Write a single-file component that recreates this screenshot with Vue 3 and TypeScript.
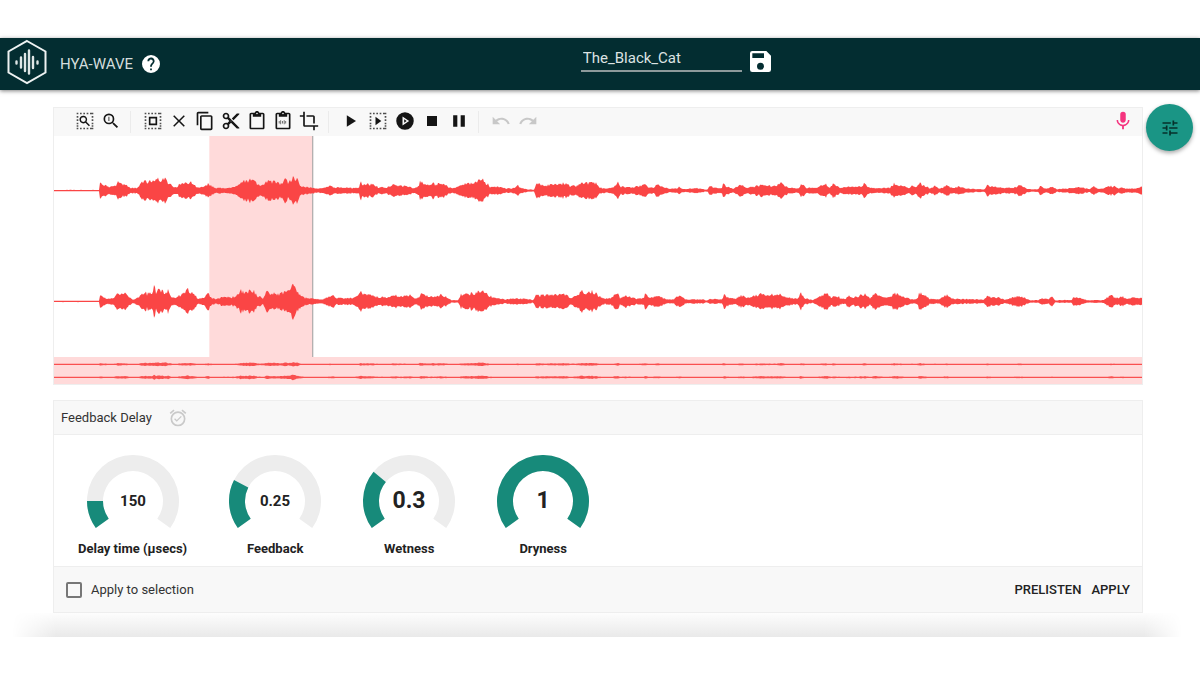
<script setup lang="ts">
import { ref } from 'vue'

interface Icon { name: string; d: string; dashed?: boolean; evenodd?: boolean }
interface Knob { label: string; value: number; ratio: number; font: number }

const trackName = ref('The_Black_Cat')
const applyToSelection = ref(false)

const dots =
  'M2 2h2v2H2zM6 2h2v2H6zM10 2h2v2h-2zM14 2h2v2h-2zM18 2h2v2h-2zM20 2h2v2h-2z' +
  'M2 20h2v2H2zM6 20h2v2H6zM10 20h2v2h-2zM14 20h2v2h-2zM18 20h2v2h-2zM20 20h2v2h-2z' +
  'M2 6h2v2H2zM2 10h2v2H2zM2 14h2v2H2zM2 17h2v2H2zM20 6h2v2h-2zM20 10h2v2h-2zM20 14h2v2h-2zM20 17h2v2h-2z'

const magnifier =
  'M15.500 14h-.79l-.28-.27A6.470 6.470 0 0 0 16 9.500 6.500 6.500 0 1 0 9.500 16c1.610 0 3.090-.59 4.230-1.570l.27.28v.79l5 4.990L20.490 19l-4.990-5zm-6 0a4.500 4.500 0 1 1 0-9 4.500 4.500 0 0 1 0 9z'

const groups: Icon[][] = [
  [
    { name: 'Zoom to selection', dashed: true, d: 'M13.800 12.800l4.200 4.200-1.300 1.300-4.200-4.200a4.600 4.600 0 1 1 1.300-1.300zM10 13.200a2.900 2.900 0 1 0 0-5.800 2.900 2.900 0 0 0 0 5.800z' },
    { name: 'Reset zoom', d: magnifier + 'M9 7h1v5H9z' },
  ],
  [
    { name: 'Select all', dashed: true, evenodd: true, d: 'M7 7h10v10H7zM9 9v6h6V9z' },
    { name: 'Deselect', d: 'M19 6.300L17.700 5 12 10.700 6.300 5 5 6.300 10.700 12 5 17.700 6.300 19 12 13.300 17.700 19 19 17.700 13.300 12z' },
    { name: 'Copy', d: 'M16 1H4c-1.100 0-2 .9-2 2v14h2V3h12V1zm3 4H8c-1.100 0-2 .9-2 2v14c0 1.100.9 2 2 2h11c1.100 0 2-.9 2-2V7c0-1.100-.9-2-2-2zm0 16H8V7h11v14z' },
    { name: 'Cut', d: 'M9.640 7.640c.23-.5.36-1.050.36-1.640 0-2.210-1.790-4-4-4S2 3.790 2 6s1.790 4 4 4c.59 0 1.140-.13 1.640-.36L10 12l-2.360 2.360C7.140 14.130 6.590 14 6 14c-2.210 0-4 1.790-4 4s1.790 4 4 4 4-1.790 4-4c0-.59-.13-1.140-.36-1.640L12 14l7 7h3v-1L9.640 7.640zM6 8a2 2 0 1 1 0-4 2 2 0 0 1 0 4zm0 12a2 2 0 1 1 0-4 2 2 0 0 1 0 4zm6-7.500a.5.5 0 1 1 0-1 .5.5 0 0 1 0 1zM19 3l-6 6 2 2 7-7V3z' },
    { name: 'Paste', d: 'M19 2h-4.180C14.400.84 13.300 0 12 0c-1.300 0-2.400.84-2.820 2H5c-1.100 0-2 .9-2 2v16c0 1.100.9 2 2 2h14c1.100 0 2-.9 2-2V4c0-1.100-.9-2-2-2zm-7 0a1 1 0 1 1 0 2 1 1 0 0 1 0-2zm7 18H5V4h2v3h10V4h2v16z' },
    { name: 'Mix paste', d: 'M19 2h-4.180C14.400.84 13.300 0 12 0c-1.300 0-2.400.84-2.820 2H5c-1.100 0-2 .9-2 2v16c0 1.100.9 2 2 2h14c1.100 0 2-.9 2-2V4c0-1.100-.9-2-2-2zm-7 0a1 1 0 1 1 0 2 1 1 0 0 1 0-2zm7 18H5V4h2v3h10V4h2v16zM7 12h.7v3H7zM9 11h.7v5H9zM11 12h.7v3H11zM13 11h.7v5h-.7zM15 12h.7v3h-.7z' },
    { name: 'Crop', d: 'M17 15h2V7c0-1.100-.9-2-2-2H9v2h8v8zM7 17V1H5v4H1v2h4v10c0 1.100.9 2 2 2h10v4h2v-4h4v-2H7z' },
  ],
  [
    { name: 'Play', d: 'M7 5v14l11-7z' },
    { name: 'Play selection', dashed: true, d: 'M9 7v10l7-5z' },
    { name: 'Play loop', evenodd: true, d: 'M12 1.500a10.500 10.500 0 1 0 0 21 10.500 10.500 0 0 0 0-21zM9 17.500v-11l8 5.500zM11 10v4l3-2z' },
    { name: 'Stop', d: 'M6 6h12v12H6z' },
    { name: 'Pause', d: 'M5 5h5v14H5zM14 5h5v14h-5z' },
  ],
]

const history: Icon[] = [
  { name: 'Undo', d: 'M12.500 8c-2.650 0-5.050.99-6.900 2.600L2 7v9h9l-3.620-3.620c1.390-1.160 3.160-1.880 5.120-1.880 3.540 0 6.550 2.310 7.600 5.500l2.370-.78C21.080 11.030 17.150 8 12.500 8z' },
  { name: 'Redo', d: 'M18.400 10.600C16.550 8.990 14.150 8 11.500 8c-4.650 0-8.580 3.030-9.960 7.220L3.900 16c1.050-3.190 4.050-5.500 7.600-5.500 1.950 0 3.730.72 5.120 1.880L13 16h9V7l-3.600 3.600z' },
]

const knobs: Knob[] = [
  { label: 'Delay time (µsecs)', value: 150, ratio: 0.143, font: 15 },
  { label: 'Feedback', value: 0.25, ratio: 0.25, font: 15 },
  { label: 'Wetness', value: 0.3, ratio: 0.3, font: 23 },
  { label: 'Dryness', value: 1, ratio: 1, font: 23 },
]

/** Ring segment of the dial, opening towards the bottom. */
function arc(ratio: number): string {
  const start = 144
  const end = start + 252 * ratio
  const point = (r: number, deg: number) => {
    const a = (deg * Math.PI) / 180
    return `${(46 + r * Math.cos(a)).toFixed(2)} ${(46 + r * Math.sin(a)).toFixed(2)}`
  }
  const large = end - start > 180 ? 1 : 0
  return `M${point(46, start)}A46 46 0 ${large} 1 ${point(46, end)}L${point(30, end)}A30 30 0 ${large} 0 ${point(30, start)}Z`
}

/* Peak envelopes as "position:amplitude"; every section starts 1110 samples after the last. */
const left = [
  '12:2 148:2 150:25 158:22 165:18 178:10 190:14 198:16 203:30 208:22 230:18 240:9 262:8 270:18 285:33 295:28 320:33 326:36 332:26 338:30 344:43 350:28 365:15 380:10 392:24 405:22 425:26 440:10 455:12 470:18 475:24 482:16 495:8 530:8 552:10 570:26 585:30 595:28 600:40 606:30 615:26 630:14 650:26 670:28 690:24 700:28 705:40 712:26 720:34 730:43 740:38 750:14 780:10 800:6 820:8 840:16 850:10 880:10 910:7 928:10 932:37 938:20 972:20 985:10 1010:10 1030:20 1050:14 1070:15 1090:8 1105:12',
  '0:26 20:18 34:18 38:29 43:18 70:24 85:10 100:7 118:14 140:22 165:24 182:33 195:28 210:12 235:12 260:6 280:8 288:10 292:20 297:10 320:4 342:3 348:22 370:18 395:18 435:24 450:14 470:14 485:27 500:24 520:30 540:10 560:6 580:10 593:26 602:12 640:10 650:14 672:19 690:10 704:8 710:22 722:12 750:6 770:6 776:12 790:4 830:8 850:6 853:3 862:3 868:14 890:8 906:8 910:34 914:16 940:6 962:20 980:8 1010:14 1025:18 1050:14 1065:14 1082:23 1100:12 1130:6',
  '0:8 25:8 35:20 50:8 75:8 108:20 118:10 132:23 150:8 170:12 205:12 215:10 220:23 240:8 290:8 300:8 312:22 345:12 358:8 361:14 382:12 390:28 400:16 420:8 436:14 450:6 472:15 490:8 508:13 530:6 580:4 584:4 590:17 600:14 640:8 670:8 690:17 710:6 720:4 745:4 750:13 770:6 787:12 800:4 848:8 870:10 900:5 912:14 925:5 942:6 950:14 975:14 985:7 995:10 1010:6 1040:8 1050:12 1056:11',
]
const right = [
  '12:2 148:2 150:22 158:14 170:8 190:10 202:26 208:22 225:24 240:12 250:6 265:14 281:26 285:34 290:24 305:26 312:44 318:30 325:40 340:30 355:34 362:14 378:10 395:24 415:36 430:24 445:8 460:10 475:26 485:10 500:8 520:14 545:12 560:20 572:32 610:32 625:16 640:10 648:34 660:28 690:24 705:28 712:38 722:34 727:58 732:58 738:36 750:22 765:12 790:8 815:6 828:10 845:20 860:10 910:10 920:14 932:32 940:22 965:20 985:12 1010:14 1035:20 1050:14 1080:20 1100:8 1108:14',
  '0:24 25:18 45:14 65:20 85:10 95:4 115:4 122:20 150:24 175:30 188:40 195:26 215:14 240:10 255:6 280:10 320:8 340:4 348:18 385:20 430:24 450:12 470:16 488:32 500:26 520:30 540:16 555:8 575:12 592:27 600:10 615:19 650:8 672:10 675:24 690:10 715:18 740:6 760:6 776:17 800:6 850:6 860:3 870:8 905:6 908:6 912:22 925:12 945:8 960:18 985:12 1020:22 1045:20 1080:23 1100:14 1130:8',
  '0:8 22:8 32:26 45:10 70:4 80:12 108:25 125:14 140:18 155:8 168:8 172:20 190:12 225:23 240:10 252:24 275:14 305:12 310:28 330:20 345:12 370:6 383:8 388:28 405:18 420:8 450:8 470:20 485:10 520:7 550:7 580:5 592:20 605:12 628:12 645:6 690:17 710:8 720:4 745:4 755:10 775:6 785:17 795:4 845:4 850:14 870:10 890:4 940:4 950:12 965:18 980:10 995:16 1010:8 1030:12 1056:12',
]

function wave(sections: string[], middle: number, gain: number, floor: number, seed: number): string {
  const keys = sections.flatMap((section, i) =>
    section.split(' ').map((pair) => {
      const [x, a] = pair.split(':').map(Number)
      return [x + i * 1110, a]
    }),
  )
  const noise = (n: number) => {
    const v = Math.sin(n * 12.9898 + seed) * 43758.5453
    return v - Math.floor(v)
  }
  const upper: string[] = []
  const lower: string[] = []
  let k = 0
  for (let x = 12; x <= 3276; x += 3) {
    while (k < keys.length - 2 && keys[k + 1][0] < x) k++
    const [x0, a0] = keys[k]
    const [x1, a1] = keys[k + 1]
    const t = Math.min(1, Math.max(0, (x - x0) / (x1 - x0)))
    const base = (a0 + (a1 - a0) * t) * gain
    const shared = 0.62 + 0.4 * noise(x)
    const up = Math.max(floor, base * (shared + 0.12 * noise(x + 4000)))
    const down = Math.max(floor, base * (shared + 0.12 * noise(x + 7000)))
    upper.push(`${x} ${(middle - up).toFixed(1)}`)
    lower.unshift(`${x} ${(middle + down).toFixed(1)}`)
  }
  return `M${upper.join('L')}L${lower.join('L')}Z`
}

const mainWaves = [wave(left, 163, 1.05, 2, 1), wave(right, 494, 1.05, 2, 5)]
const miniWaves = [wave(left, 22, 0.16, 2, 1), wave(right, 61, 0.16, 2, 5)]
</script>

<template>
  <div class="app">
    <header class="bar">
      <div class="brand">
        <svg class="logo" viewBox="0 0 42 46" aria-hidden="true">
          <path d="M21 2L39.500 12.500V33.500L21 44 2.500 33.500V12.500Z" fill="none" stroke="#eef2f2" stroke-width="2" />
          <path d="M10.500 22.500v2M15 18.500v10M19 15v17M23 11.500v23M27 18v11M31.500 22.500v2" stroke="#dfe6e6" stroke-width="2.400" stroke-linecap="round" />
        </svg>
        <h1>HYA-WAVE</h1>
        <button class="plain" aria-label="Help">
          <svg class="help" viewBox="2 2 20 20"><path d="M15.070 11.250l-.9.920C13.450 12.890 13 13.500 13 15h-2v-.5c0-1.110.45-2.110 1.170-2.830l1.240-1.260A2 2 0 1 0 10 9H8a4 4 0 1 1 7.070 2.250M13 19h-2v-2h2M12 2a10 10 0 1 0 0 20 10 10 0 0 0 0-20z" /></svg>
        </button>
      </div>
      <div class="track">
        <input v-model="trackName" type="text" aria-label="Track name" spellcheck="false" />
        <button class="plain" aria-label="Save">
          <svg class="save" viewBox="3 3 18 18"><path d="M17 3H5a2 2 0 0 0-2 2v14a2 2 0 0 0 2 2h14a2 2 0 0 0 2-2V7l-4-4zm-5 16a3 3 0 1 1 0-6 3 3 0 0 1 0 6zm3-10H5V5h10v4z" /></svg>
        </button>
      </div>
    </header>

    <div class="workspace">
      <main>
        <section class="editor" aria-label="Waveform editor">
          <div class="toolbar">
            <template v-for="(group, g) in groups" :key="g">
              <div class="group" :class="{ spaced: g === 2 }">
                <button v-for="icon in group" :key="icon.name" class="plain tool" :aria-label="icon.name">
                  <svg viewBox="0 0 24 24">
                    <path v-if="icon.dashed" :d="dots" opacity="0.75" />
                    <path :d="icon.d" :fill-rule="icon.evenodd ? 'evenodd' : 'nonzero'" />
                  </svg>
                </button>
              </div>
              <span class="divider"></span>
            </template>
            <div class="group spaced">
              <button v-for="icon in history" :key="icon.name" class="plain tool" :aria-label="icon.name" disabled>
                <svg viewBox="0 0 24 24"><path :d="icon.d" /></svg>
              </button>
            </div>
            <button class="plain tool record" aria-label="Record">
              <svg viewBox="0 0 24 24"><path d="M12 14c1.660 0 3-1.340 3-3V5a3 3 0 1 0-6 0v6c0 1.660 1.340 3 3 3zm5.300-3c0 3-2.540 5.100-5.300 5.100S6.700 14 6.700 11H5c0 3.410 2.720 6.230 6 6.720V21h2v-3.280c3.280-.48 6-3.300 6-6.720h-1.700z" /></svg>
            </button>
          </div>
          <svg class="waves" viewBox="12 0 3264 660" preserveAspectRatio="none" role="img" aria-label="Stereo waveform">
            <rect x="478" y="0" width="309" height="660" fill="#ffdada" />
            <rect x="786" y="0" width="4" height="660" fill="#b4b0b0" />
            <path v-for="(d, i) in mainWaves" :key="i" :d="d" fill="#fa4545" />
          </svg>
          <svg class="overview" viewBox="12 0 3264 81" preserveAspectRatio="none" role="img" aria-label="Overview">
            <path v-for="(d, i) in miniWaves" :key="i" :d="d" fill="#f95050" />
          </svg>
        </section>

        <section class="effect">
          <header class="effect-head">
            <h2>Feedback Delay</h2>
            <svg viewBox="0 0 24 24" aria-hidden="true"><path d="M22 5.720l-4.600-3.860-1.290 1.530 4.600 3.860L22 5.720zM7.880 3.390L6.600 1.860 2 5.710l1.290 1.530 4.590-3.850zM12 4a9 9 0 1 0 0 18 9 9 0 0 0 0-18zm0 16a7 7 0 1 1 0-14 7 7 0 0 1 0 14zm-1.460-5.470L8.410 12.400l-1.060 1.060 3.180 3.180 6-6-1.060-1.060-4.930 4.950z" /></svg>
          </header>
          <div class="knobs">
            <figure v-for="knob in knobs" :key="knob.label">
              <svg viewBox="0 0 92 74" role="img" :aria-label="knob.label">
                <path :d="arc(1)" fill="#ededed" />
                <path :d="arc(knob.ratio)" fill="#178a7a" />
                <text x="46" :y="knob.font > 15 ? 53 : 51" text-anchor="middle" :font-size="knob.font">{{ knob.value }}</text>
              </svg>
              <figcaption>{{ knob.label }}</figcaption>
            </figure>
          </div>
          <footer class="effect-foot">
            <label><input v-model="applyToSelection" type="checkbox" /> Apply to selection</label>
            <div class="actions">
              <button class="plain">PRELISTEN</button>
              <button class="plain">APPLY</button>
            </div>
          </footer>
        </section>
      </main>
      <aside>
        <button class="plain fab" aria-label="Effects">
          <svg viewBox="0 0 24 24"><path d="M3 17v2h6v-2H3zM3 5v2h10V5H3zm10 16v-2h8v-2h-8v-2h-2v6h2zM7 9v2H3v2h4v2h2V9H7zm14 4v-2H11v2h10zm-6-4h2V7h4V5h-4V3h-2v6z" /></svg>
        </button>
      </aside>
    </div>
    <div class="shade"></div>
  </div>
</template>

<style>
body {
  margin: 0;
  background: #fff;
}
</style>

<style scoped>
.app {
  box-sizing: border-box;
  padding-top: 38px;
  font-family: Roboto, "Liberation Sans", sans-serif;
  color: #333;
}
h1, h2, figure {
  margin: 0;
}
svg {
  display: block;
  fill: currentColor;
}
.plain {
  display: block;
  padding: 0;
  border: 0;
  background: none;
  color: inherit;
  font: inherit;
}
.bar {
  display: grid;
  grid-template-columns: 48.4% 1fr;
  align-items: center;
  height: 52px;
  background: #032d31;
  color: #fff;
  box-shadow: 0 1px 4px rgba(0, 0, 0, 0.5);
}
.brand {
  display: flex;
  align-items: center;
  padding-left: 6px;
}
.logo {
  width: 42px;
  height: 46px;
  margin-bottom: 4px;
}
h1 {
  margin: 0 9px 0 12px;
  font-size: 15px;
  line-height: 20px;
  font-weight: 400;
  color: #d5dddd;
}
.help {
  width: 18px;
  height: 18px;
}
.track {
  display: flex;
  align-items: center;
  gap: 8px;
  padding-bottom: 10px;
}
.track input {
  box-sizing: border-box;
  width: 161px;
  height: 26px;
  padding: 0 2px;
  border: 0;
  border-bottom: 2px solid #8d9a9b;
  outline: 0;
  background: none;
  color: #dde3e3;
  font: 15px/24px Roboto, "Liberation Sans", sans-serif;
}
.save {
  width: 21px;
  height: 21px;
}
.track .plain {
  padding-top: 5px;
}
.workspace {
  display: flex;
  padding-left: 53px;
}
main {
  flex: 1;
  min-width: 0;
  padding-top: 17px;
}
aside {
  flex: 0 0 57px;
  padding-top: 14px;
}
.fab {
  display: grid;
  place-items: center;
  width: 47px;
  height: 47px;
  margin-left: 3px;
  border-radius: 50%;
  background: #1a9585;
  color: #06302b;
  box-shadow: 0 2px 4px rgba(0, 0, 0, 0.35);
}
.fab svg {
  width: 20px;
  height: 20px;
}
.editor, .effect {
  border: 1px solid #eee;
}
.toolbar {
  display: flex;
  align-items: flex-start;
  height: 28px;
  padding: 0 6px 0 18px;
  background: #f8f8f8;
  color: #151515;
}
.group {
  display: flex;
}
.spaced {
  gap: 1px;
}
.tool {
  display: grid;
  place-items: center;
  width: 26px;
  height: 26px;
}
.tool svg {
  width: 20px;
  height: 20px;
}
.tool:disabled {
  color: #c8c8c8;
}
.record {
  margin-left: auto;
  color: #f5347f;
}
.record svg {
  width: 22px;
  height: 22px;
}
.divider {
  width: 1px;
  height: 22px;
  margin: 3px 9px 0 6px;
  background: #ebebeb;
}
.waves {
  width: 100%;
  height: 221px;
}
.overview {
  width: 100%;
  height: 27px;
  background: #ffdada;
}
.effect {
  margin-top: 15px;
}
.effect-head {
  display: flex;
  align-items: center;
  gap: 16px;
  height: 33px;
  padding-left: 7px;
  border-bottom: 1px solid #eee;
  background: #f8f8f8;
}
h2 {
  font-size: 13px;
  line-height: 20px;
  font-weight: 400;
  color: #333;
}
.effect-head svg {
  width: 20px;
  height: 20px;
  color: #c9c9c9;
}
.knobs {
  display: flex;
  gap: 42px;
  padding: 20px 24px 8px;
}
figure {
  display: flex;
  flex-direction: column;
  align-items: center;
}
figure svg {
  width: 92px;
  height: 74px;
}
figure text {
  fill: #222;
  font-weight: 700;
}
figcaption {
  margin-top: 11px;
  font-size: 13px;
  line-height: 18px;
  font-weight: 700;
  color: #222;
}
.effect-foot {
  display: flex;
  align-items: center;
  justify-content: space-between;
  height: 45px;
  padding: 0 12px;
  border-top: 1px solid #eee;
  background: #f8f8f8;
  font-size: 13px;
  line-height: 20px;
}
.effect-foot label {
  display: flex;
  align-items: center;
  gap: 9px;
  color: #333;
}
.effect-foot input {
  appearance: none;
  box-sizing: border-box;
  width: 16px;
  height: 16px;
  margin: 0;
  border: 2px solid #777;
  border-radius: 2px;
}
.effect-foot input:checked {
  background: #178a7a;
}
.actions {
  display: flex;
  gap: 10px;
  color: #222;
  font-weight: 500;
}
.shade {
  height: 24px;
  background: linear-gradient(to bottom, #fdfdfd, #e9e9e9);
  mask-image: linear-gradient(to right, transparent 12px, #000 56px, #000 calc(100% - 56px), transparent calc(100% - 18px));
}
</style>
